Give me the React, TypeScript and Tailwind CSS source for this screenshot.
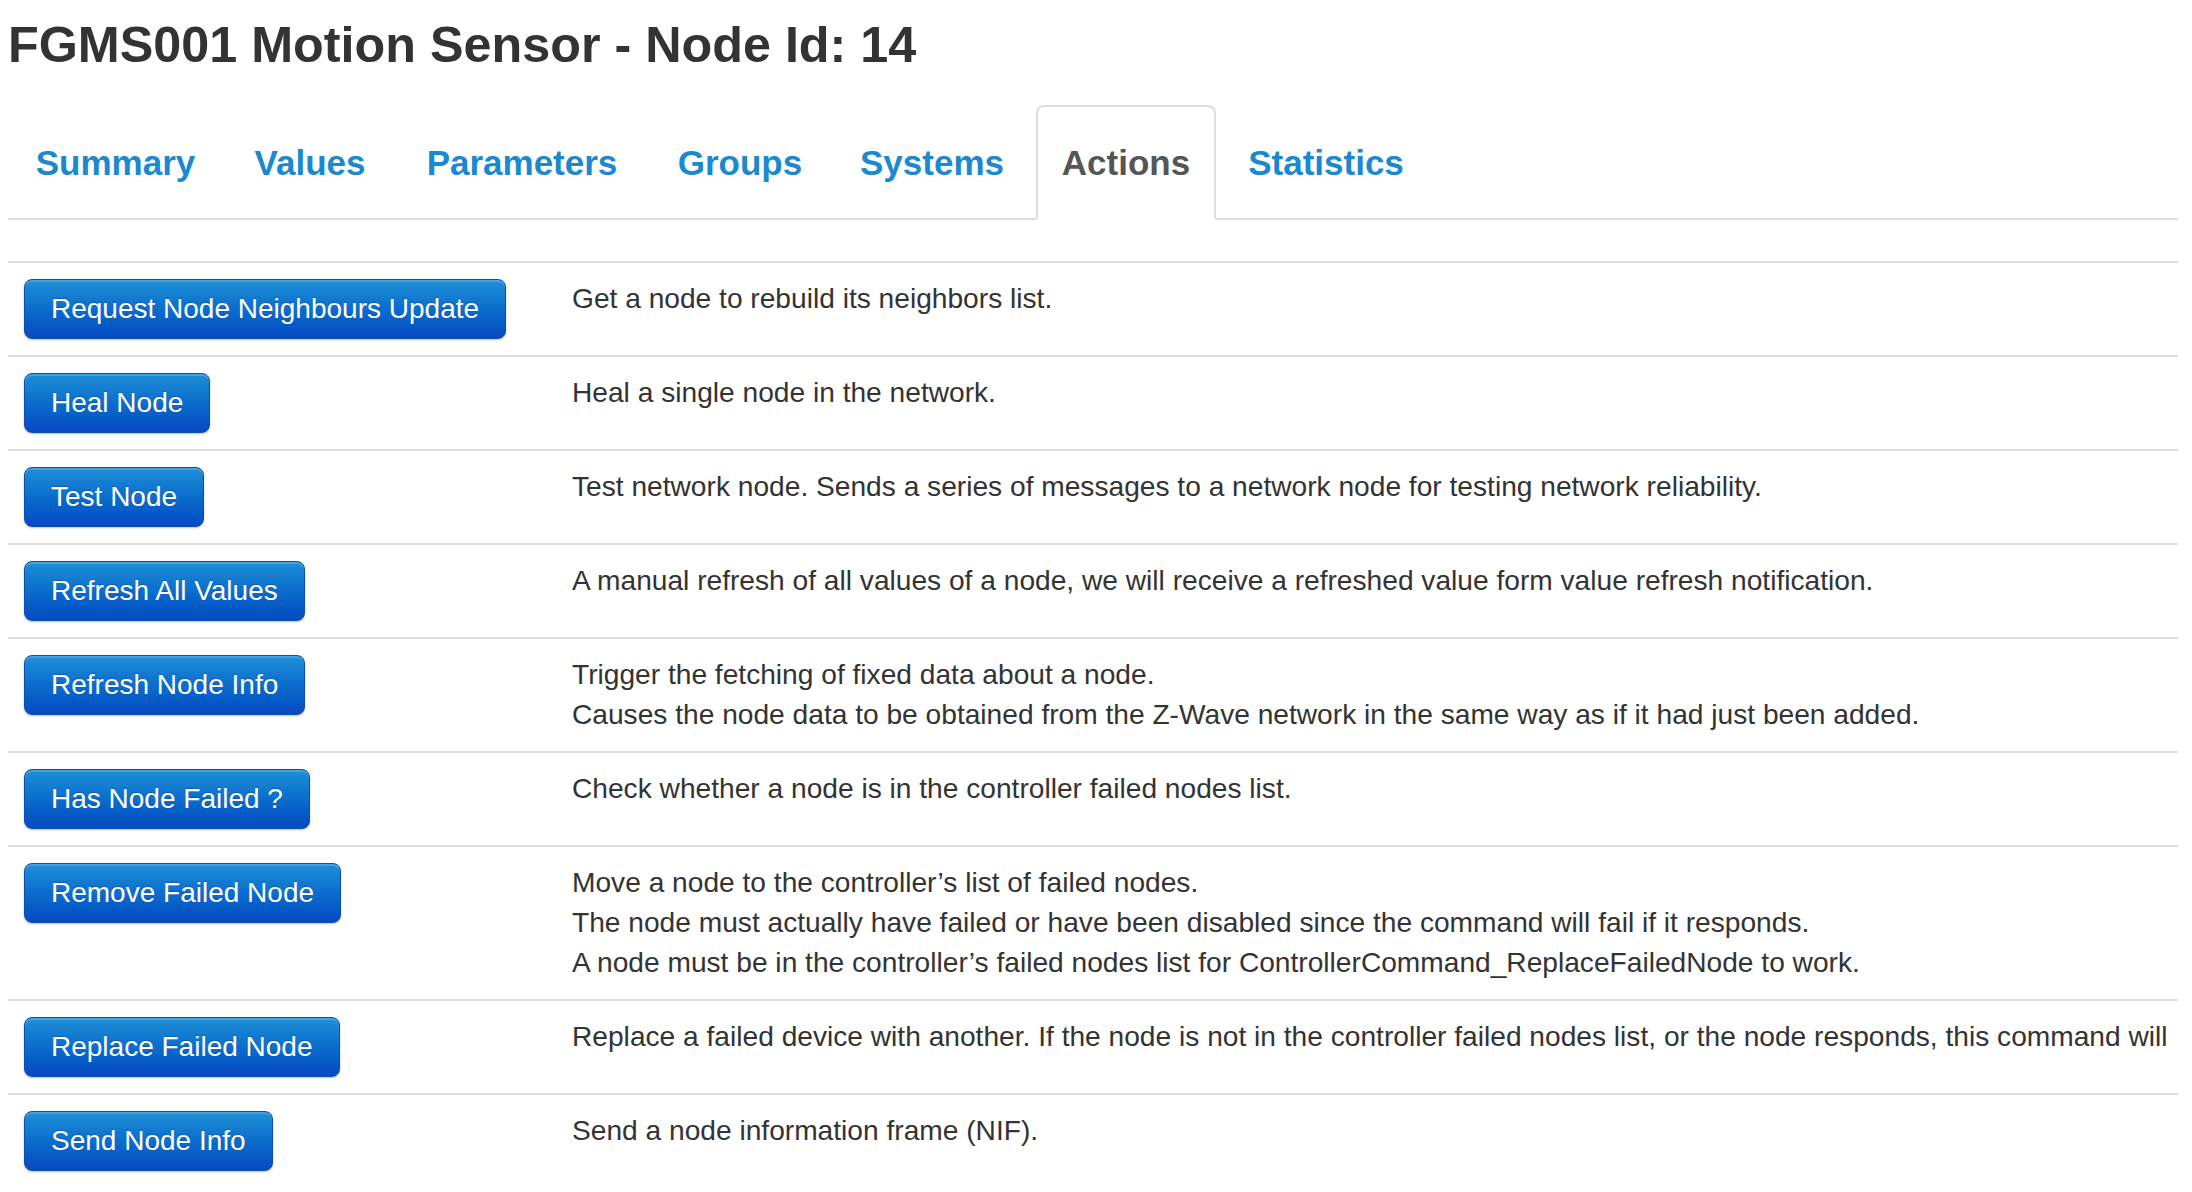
import React from "react";

const tabs: { label: string; w: string; active?: boolean }[] = [
  { label: "Summary", w: "w-[215px]" },
  { label: "Values", w: "w-[164px]" },
  { label: "Parameters", w: "w-[250px]" },
  { label: "Groups", w: "w-[176px]" },
  { label: "Systems", w: "w-[198px]" },
  { label: "Actions", w: "w-[180px]", active: true },
  { label: "Statistics", w: "w-[210px]" },
];

const rows: { btn: string; lines: string[] }[] = [
  { btn: "Request Node Neighbours Update", lines: ["Get a node to rebuild its neighbors list."] },
  { btn: "Heal Node", lines: ["Heal a single node in the network."] },
  {
    btn: "Test Node",
    lines: ["Test network node. Sends a series of messages to a network node for testing network reliability."],
  },
  {
    btn: "Refresh All Values",
    lines: [
      "A manual refresh of all values of a node, we will receive a refreshed value form value refresh notification.",
    ],
  },
  {
    btn: "Refresh Node Info",
    lines: [
      "Trigger the fetching of fixed data about a node.",
      "Causes the node data to be obtained from the Z-Wave network in the same way as if it had just been added.",
    ],
  },
  { btn: "Has Node Failed ?", lines: ["Check whether a node is in the controller failed nodes list."] },
  {
    btn: "Remove Failed Node",
    lines: [
      "Move a node to the controller\u2019s list of failed nodes.",
      "The node must actually have failed or have been disabled since the command will fail if it responds.",
      "A node must be in the controller\u2019s failed nodes list for ControllerCommand_ReplaceFailedNode to work.",
    ],
  },
  {
    btn: "Replace Failed Node",
    lines: [
      "Replace a failed device with another. If the node is not in the controller failed nodes list, or the node responds, this command will",
    ],
  },
  { btn: "Send Node Info", lines: ["Send a node information frame (NIF)."] },
];

export default function App() {
  return (
    <div className="w-[2192px] h-[1192px] bg-white overflow-hidden">
      <div
        className="w-[2178px] pl-2 overflow-hidden text-[#333]"
        style={{ fontFamily: '"Liberation Sans", Arial, Helvetica, sans-serif' }}
      >
        <h3 className="mt-[17px] text-[50.3px] leading-[55px] font-bold text-[#333]">
          FGMS001 Motion Sensor - Node Id: 14
        </h3>

        <ul className="mt-[33px] flex border-b-2 border-[#ddd]">
          {tabs.map((t) => (
            <li
              key={t.label}
              className={
                t.active
                  ? `${t.w} mr-[5px] -mb-[2px] rounded-t-[8px] border-2 border-[#ddd] border-b-white bg-white pt-[31px] pb-[30px] text-center text-[35px] leading-[50px] font-bold text-[#555]`
                  : `${t.w} mr-[5px] -mb-[2px] rounded-t-[8px] border-2 border-transparent pt-[31px] pb-[30px] text-center text-[35px] leading-[50px] font-bold text-[#1a89cf]`
              }
            >
              {t.label}
            </li>
          ))}
        </ul>

        <div className="mt-[41px]">
          {rows.map((r) => (
            <div key={r.btn} className="flex border-t-2 border-[#ddd]">
              <div className="w-[548px] shrink-0 px-4 py-4">
                <button
                  type="button"
                  className="rounded-[8px] border border-[#0d4fa8] bg-gradient-to-b from-[#1f8fd6] to-[#0948c2] px-[26px] py-[9px] text-[28px] leading-[40px] text-white whitespace-nowrap shadow-[inset_0_2px_0_rgba(255,255,255,0.18),0_1px_2px_rgba(0,0,0,0.25)] [text-shadow:0_-1px_0_rgba(0,0,0,0.2)]"
                >
                  {r.btn}
                </button>
              </div>
              <div className="min-w-0 flex-1 overflow-hidden px-4 py-4 text-[28.15px] leading-[40px] whitespace-nowrap text-[#333]">
                {r.lines.map((l, i) => (
                  <div key={i}>{l}</div>
                ))}
              </div>
            </div>
          ))}
        </div>
      </div>
    </div>
  );
}
